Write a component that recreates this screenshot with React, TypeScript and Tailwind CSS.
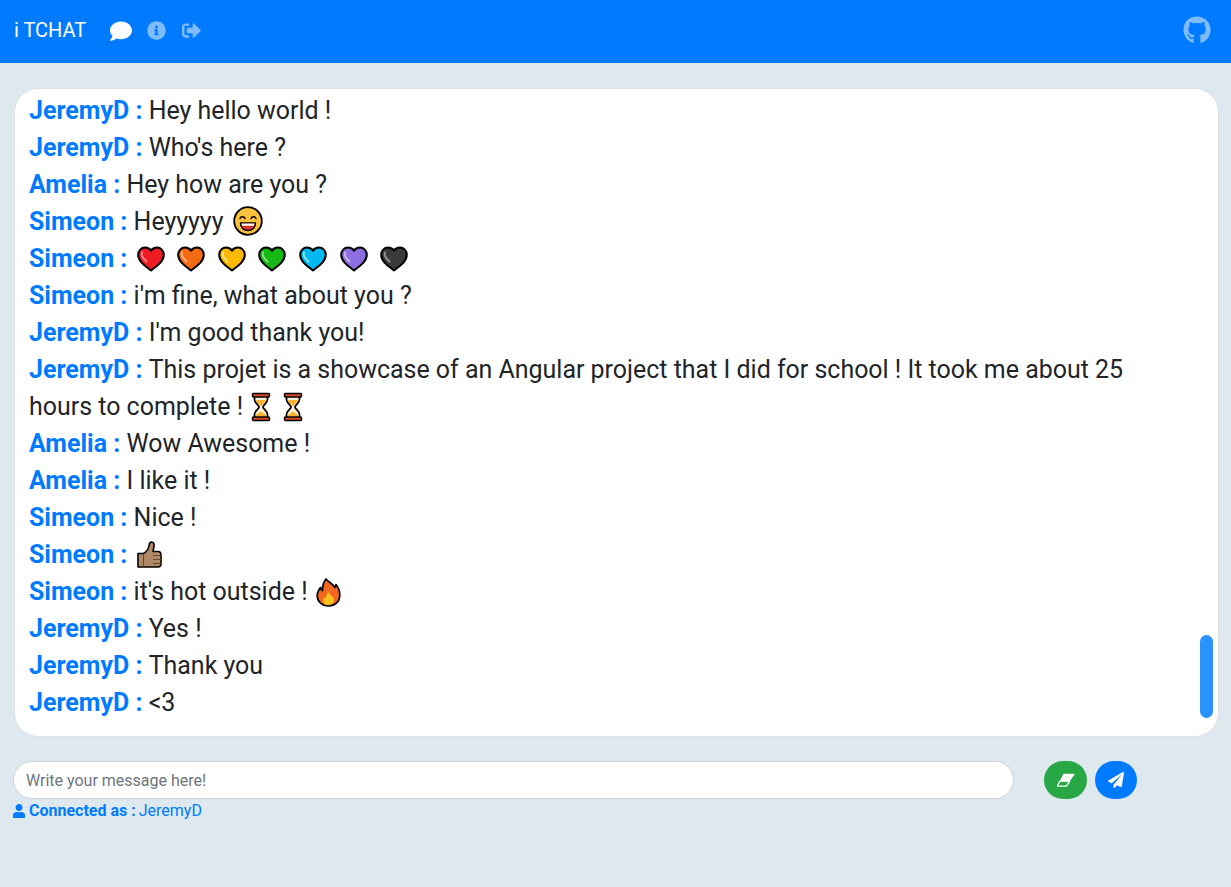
import { ReactNode } from "react";
import { FaComment, FaGithub, FaInfoCircle, FaPaperPlane, FaSignOutAlt, FaUser } from "react-icons/fa";

// Heart emoji with black outline and a soft highlight
function Heart({ color, shine }: { color: string; shine: string }) {
  return (
    <svg viewBox="0 0 28 26" className="inline-block w-[28px] h-[26px] mr-[12.6px] align-[-5px]">
      <path
        d="M14 24.5C9 20.500 1.200 16 1.200 8.800 1.200 4.500 4.300 1.600 8 1.600c2.600 0 4.800 1.100 6 3.200 1.200-2.100 3.400-3.200 6-3.200 3.700 0 6.800 2.900 6.800 7.200C26.800 16 19 20.500 14 24.500z"
        fill={color}
        stroke="#000"
        strokeWidth="2"
        strokeLinejoin="round"
      />
      <path d="M5 6.500C4 9 6 12.500 9.500 15.500" fill="none" stroke={shine} strokeWidth="2" strokeLinecap="round" />
    </svg>
  );
}

function Grin() {
  return (
    <svg viewBox="0 0 30 30" className="ml-[3px] inline-block w-[30px] h-[30px] align-[-6px]">
      <circle cx="15" cy="15" r="13.800" fill="#f9c13c" stroke="#000" strokeWidth="1.800" />
      <path d="M7 12.500c1-2.400 4-2.400 5 0M18 12.500c1-2.400 4-2.400 5 0" fill="none" stroke="#000" strokeWidth="1.500" strokeLinecap="round" />
      <path d="M7.500 17h15c0 4.500-3.300 7.500-7.500 7.500S7.500 21.500 7.500 17z" fill="#d6372b" stroke="#000" strokeWidth="1.400" strokeLinejoin="round" />
      <path d="M8.500 17.600h13l-.6 2.200H9.100z" fill="#fff" />
    </svg>
  );
}

function Hourglass() {
  return (
    <svg viewBox="0 0 20 30" className="ml-[2px] mr-[10px] inline-block w-[20px] h-[30px] align-[-7px]">
      <path d="M3.500 4h13v3.500c0 3.500-4.500 5.500-4.500 7.500s4.500 4 4.500 7.500V26h-13v-3.500C3.500 19 8 17 8 15S3.500 11 3.500 7.500z" fill="#fdf0d5" stroke="#000" strokeWidth="1.800" />
      <path d="M4.500 8h11c-.5 2.500-4.500 4.500-5.500 6.500C9 12.500 5 10.500 4.500 8zM4.500 24.500c.3-2 3.500-4 5.500-5 2 1 5.200 3 5.500 5z" fill="#f9b233" />
      <rect x="1.500" y="1.500" width="17" height="3.500" rx="1" fill="#d9481f" stroke="#000" strokeWidth="1.500" />
      <rect x="1.500" y="25" width="17" height="3.500" rx="1" fill="#d9481f" stroke="#000" strokeWidth="1.500" />
    </svg>
  );
}

function Thumb() {
  return (
    <svg viewBox="0 0 25 27" className="ml-[3px] inline-block w-[25px] h-[27px] align-[-5px]">
      <path
        d="M1 12.500h5.500c2.500-1.500 5-4.500 5.500-8 .3-2 1-3.500 2.500-3.500 2 0 3 1.800 2.500 4.500L16 10.500h5c2.200 0 3 1.500 3 3.500v9c0 2-1 3-3 3H1z"
        fill="#b08a66"
        stroke="#000"
        strokeWidth="1.600"
        strokeLinejoin="round"
      />
      <path d="M16 14.500h8M16 18.500h8M16 22.500h8M6.500 13v13" stroke="#6b4a2a" strokeWidth="1.100" fill="none" />
    </svg>
  );
}

function Fire() {
  return (
    <svg viewBox="0 0 25 29" className="ml-[2px] inline-block w-[25px] h-[29px] align-[-7px]">
      <path
        d="M10 1c3 3.500 7 5 9 8.500.8-1 1-2 1-3 2.500 3 3.800 6.500 3.800 10.500 0 6.500-4.800 11-11.300 11S1.200 23.500 1.200 17.500c0-3.500 1.800-6 3.300-8 .3 1.500 1 2.500 2 3C6.500 8.500 7.500 4 10 1z"
        fill="#f4671f"
        stroke="#000"
        strokeWidth="1.700"
        strokeLinejoin="round"
      />
      <path d="M12.500 14c.5 2.500 5.500 4.500 5.500 8.500 0 2.500-2.400 4.500-5.500 4.500S7 25 7 22.500c0-1.500.6-2.800 1.500-3.500.3 1 .8 1.400 1.500 1.600-.3-2.500 1-4.800 2.500-6.600z" fill="#fcc21b" />
    </svg>
  );
}

// FA4 style eraser: filled top half, outlined lower half
function Eraser() {
  return (
    <svg viewBox="0 0 18 15" className="w-[18px] h-[15px]">
      <path d="M6.500.8h10.200c.7 0 1 .7.6 1.300L12.600 8.200H2.700z" fill="#fff" />
      <path d="M2.700 8.200h9.900l-3.100 5H1.300c-.6 0-.9-.6-.6-1.100z" fill="none" stroke="#fff" strokeWidth="1.300" strokeLinejoin="round" />
    </svg>
  );
}

const hearts = [
  ["#ed1c24", "#f8838a"],
  ["#f46a12", "#fbb27f"],
  ["#fdb900", "#ffe08a"],
  ["#16b814", "#7fe07e"],
  ["#00b9f0", "#8be2fb"],
  ["#8c6ee0", "#c6b6f2"],
  ["#3a3a3a", "#8f8f8f"],
];

// Messages, in the order they show in the chat
const messages: { user: string; body: ReactNode }[] = [
  { user: "JeremyD", body: "Hey hello world !" },
  { user: "JeremyD", body: "Who's here ?" },
  { user: "Amelia", body: "Hey how are you ?" },
  { user: "Simeon", body: <>Heyyyyy <Grin /></> },
  { user: "Simeon", body: <span className="ml-[3px]">{hearts.map(([c, s]) => <Heart key={c} color={c} shine={s} />)}</span> },
  { user: "Simeon", body: "i'm fine, what about you ?" },
  { user: "JeremyD", body: "I'm good thank you!" },
  {
    user: "JeremyD",
    body: <>This projet is a showcase of an Angular project that I did for school ! It took me about 25 hours to complete ! <Hourglass /><Hourglass /></>,
  },
  { user: "Amelia", body: "Wow Awesome !" },
  { user: "Amelia", body: "I like it !" },
  { user: "Simeon", body: "Nice !" },
  { user: "Simeon", body: <Thumb /> },
  { user: "Simeon", body: <>it's hot outside ! <Fire /></> },
  { user: "JeremyD", body: "Yes !" },
  { user: "JeremyD", body: "Thank you" },
  { user: "JeremyD", body: "<3" },
];

export default function App() {
  return (
    <div className="min-h-[887px] bg-[#dee8ef] font-['Roboto',sans-serif] text-[#212529]">
      <header className="flex h-[63px] items-center bg-[#007bff] pb-[4px] pl-[14px] pr-[20px]">
        <span className="text-[20px] text-white">i TCHAT</span>
        <FaComment className="ml-[24px] mt-[2px] text-[22px] text-white" />
        <FaInfoCircle className="ml-[15px] mt-px text-[19px] text-white/50" />
        <FaSignOutAlt className="ml-[16px] mt-px text-[19px] text-white/50" />
        <FaGithub className="ml-auto text-[28px] text-white/50" />
      </header>

      <main className="px-[13px] pt-[25px]">
        <div className="relative ml-px h-[649px] w-[1205px] overflow-hidden rounded-[24px] border border-[#dbe0e4] bg-white pl-[14px] pr-[60px] pt-[3px]">
          {messages.map((m, i) => (
            <p key={i} className="text-[24.96px] leading-[37px]">
              <b className="font-bold text-[#007bff]">{m.user} : </b>
              {m.body}
            </p>
          ))}
          <div className="absolute right-[5px] top-[546px] h-[83px] w-[13px] rounded-full bg-[#2993ff]" />
        </div>

        <div className="mt-[24px] flex items-center">
          <input
            placeholder="Write your message here!"
            className="h-[38px] w-[1001px] rounded-full border border-[#ced4da] bg-white px-[12px] text-[16px] outline-none placeholder:text-[#6c757d]"
          />
          <button className="ml-[30px] flex h-[38px] w-[43px] items-center justify-center rounded-full bg-[#28a745] text-white">
            <Eraser />
          </button>
          <button className="ml-[8px] flex h-[38px] w-[42px] items-center justify-center rounded-full bg-[#007bff] text-[16px] text-white">
            <FaPaperPlane />
          </button>
        </div>

        <div className="flex items-center text-[16px] leading-[24px] text-[#007bff]">
          <FaUser className="-ml-px mr-[3px] text-[14px]" />
          <b className="font-bold">Connected as :&nbsp;</b>
          <span className="-ml-px">JeremyD</span>
        </div>
      </main>
    </div>
  );
}
